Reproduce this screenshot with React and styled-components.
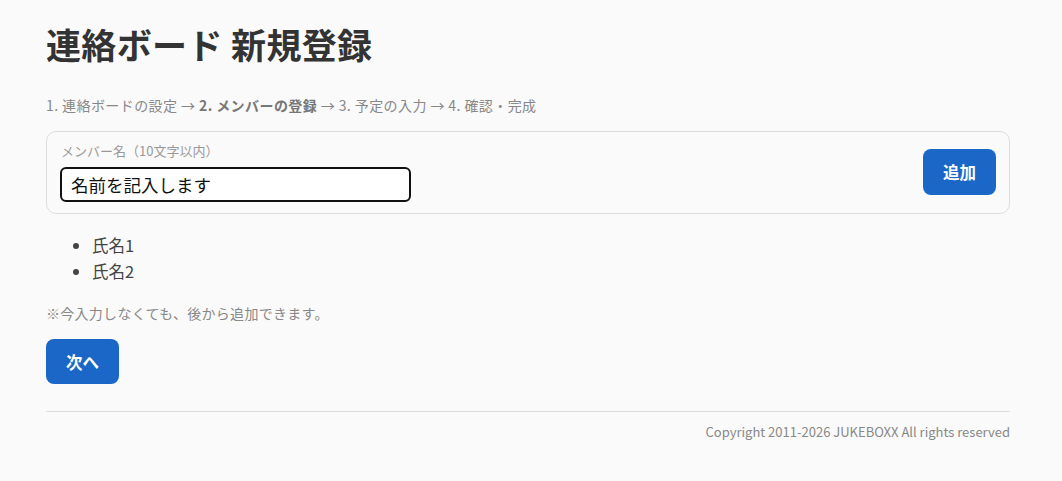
import React, { useState } from "react";
import styled, { createGlobalStyle } from "styled-components";

const GlobalStyle = createGlobalStyle`
  body {
    margin: 0;
    background: #fafafa;
    font-family: "Noto Sans CJK JP", "Noto Sans", sans-serif;
    color: #333;
  }
`;

const App = () => {
  const [name, setName] = useState("名前を記入します");
  const members = ["氏名1", "氏名2"];

  return (
    <>
      <GlobalStyle />
      <Page>
        <Title>連絡ボード 新規登録</Title>
        <Steps>
          1. 連絡ボードの設定 → <b>2. メンバーの登録</b> → 3. 予定の入力 → 4. 確認・完成
        </Steps>
        <Card>
          <Field>
            <Label>メンバー名（10文字以内）</Label>
            <Input value={name} onChange={(e) => setName(e.target.value)} />
          </Field>
          <Button>追加</Button>
        </Card>
        <MemberList>
          {members.map((m) => (
            <li key={m}>{m}</li>
          ))}
        </MemberList>
        <Note>※今入力しなくても、後から追加できます。</Note>
        <Button $short>次へ</Button>
        <Footer>Copyright 2011-2026 JUKEBOXX All rights reserved</Footer>
      </Page>
    </>
  );
};

export default App;

const Page = styled.div`
  width: 964px;
  margin-left: 46px;
  padding-top: 18px;
`;

const Title = styled.h1`
  margin: 0;
  font-size: 35px;
  font-weight: 700;
  line-height: 52px;
  letter-spacing: 0.01em;
  color: #333;
`;

const Steps = styled.p`
  margin: 25px 0 0;
  font-size: 14px;
  line-height: 20px;
  letter-spacing: 0.03em;
  color: #888;
  b {
    color: #777;
  }
`;

const Card = styled.div`
  margin-top: 16px;
  border: 1px solid #ddd;
  border-radius: 10px;
  background: #fafafa;
  display: flex;
  align-items: center;
  justify-content: space-between;
  padding: 10px 13px 11px;
`;

const Field = styled.div`
  display: flex;
  flex-direction: column;
  gap: 7px;
`;

const Label = styled.label`
  font-size: 13px;
  line-height: 18px;
  color: #999;
  padding-left: 1px;
`;

const Input = styled.input`
  width: 351px;
  height: 35px;
  box-sizing: border-box;
  border: 2px solid #111;
  border-radius: 6px;
  background: #fff;
  padding: 0 9px;
  font-family: inherit;
  font-size: 17.5px;
  color: #111;
  outline: none;
`;

const Button = styled.button`
  width: 73px;
  height: ${(p) => (p.$short ? 45 : 46)}px;
  border: none;
  border-radius: 8px;
  background: #1a67c8;
  color: #fff;
  font-family: inherit;
  font-size: 16.5px;
  font-weight: 700;
  cursor: pointer;
`;

const MemberList = styled.ul`
  margin: 18px 0 0;
  padding-left: 46px;
  font-size: 16.5px;
  line-height: 26px;
  color: #444;
`;

const Note = styled.p`
  margin: 19px 0 16px;
  font-size: 14px;
  line-height: 20px;
  letter-spacing: 0.02em;
  color: #888;
`;

const Footer = styled.footer`
  margin-top: 27px;
  border-top: 1px solid #ddd;
  padding-top: 11px;
  text-align: right;
  font-size: 13px;
  line-height: 18px;
  color: #888;
`;
